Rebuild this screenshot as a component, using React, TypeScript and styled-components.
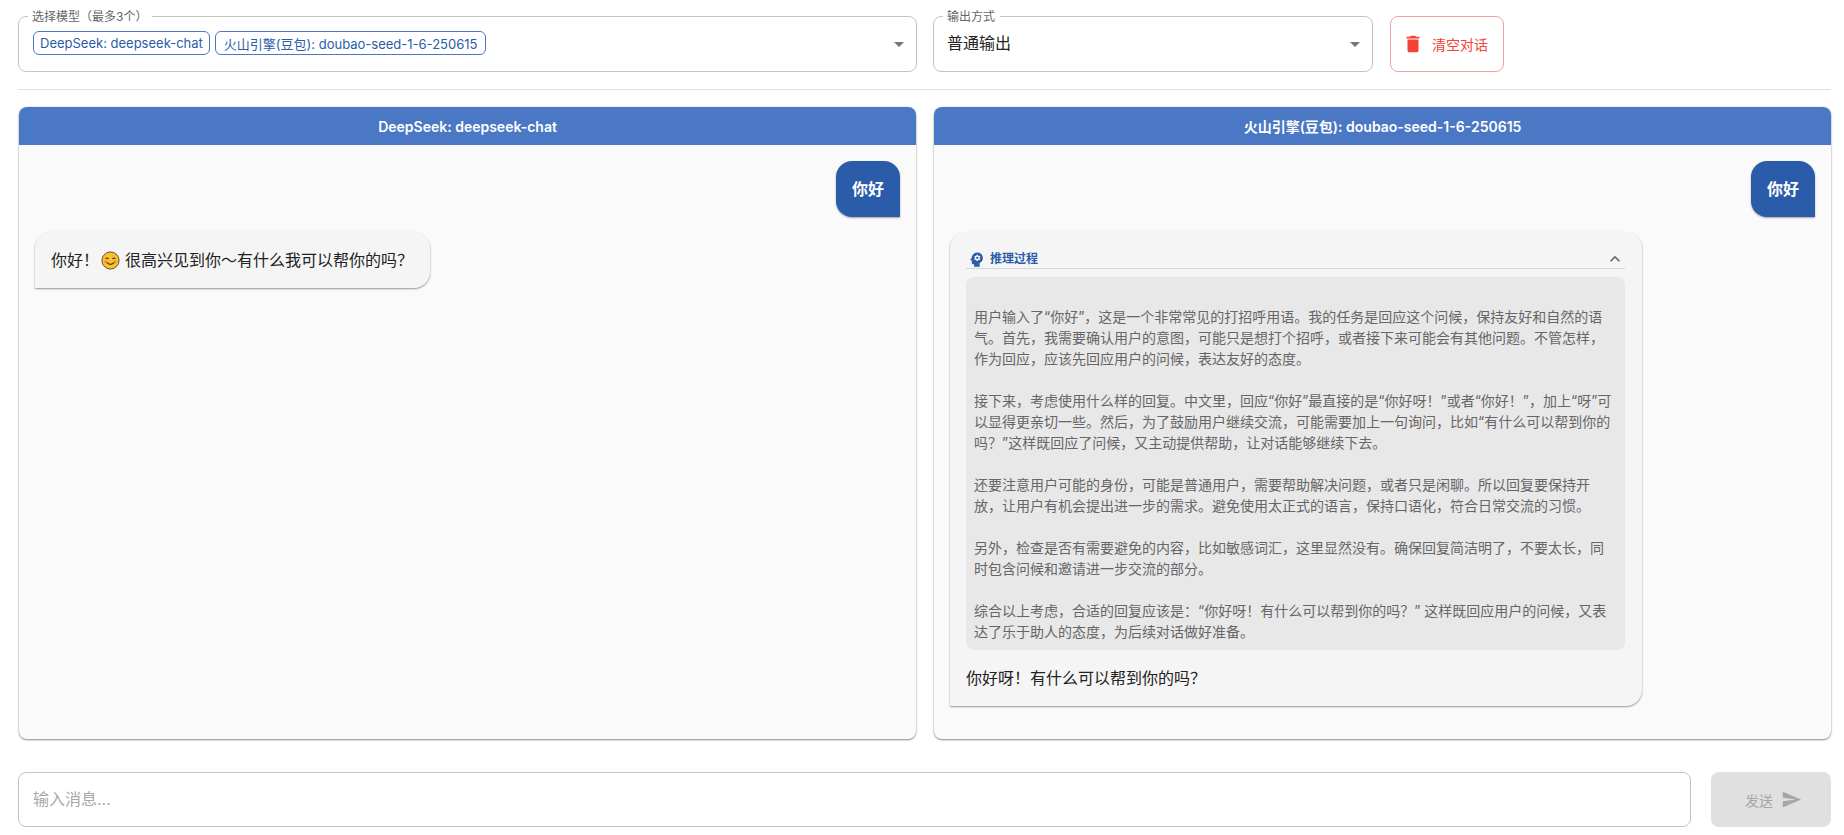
import React from "react";
import styled, { createGlobalStyle } from "styled-components";
import {
  MdArrowDropDown,
  MdDelete,
  MdExpandLess,
  MdPsychology,
  MdSend,
} from "react-icons/md";

const GlobalStyle = createGlobalStyle`
  html, body {
    margin: 0;
    padding: 0;
    background: #fff;
    font-family: Inter, "Noto Sans CJK SC", sans-serif;
  }
  * { box-sizing: border-box; }
`;

const Page = styled.div`
  width: 1844px;
  height: 835px;
  padding: 16px 13px 8px 18px;
  display: flex;
  flex-direction: column;
  overflow: hidden;
`;

const Toolbar = styled.div`
  display: flex;
  align-items: flex-start;
  height: 56px;
`;

const Field = styled.div<{ $width: number; $height: number }>`
  position: relative;
  width: ${(p) => p.$width}px;
  height: ${(p) => p.$height}px;
  margin-right: 16px;
  border: 1px solid #c4c4c4;
  border-radius: 8px;
  padding: 0 13px;
  display: flex;
  align-items: center;
  flex-shrink: 0;
`;

const FieldLabel = styled.span`
  position: absolute;
  top: -8px;
  left: 9px;
  padding: 0 5px 0 4px;
  background: #fff;
  font-size: 12px;
  line-height: 15px;
  color: #666;
`;

const Chips = styled.div`
  display: flex;
  gap: 5px;
  margin-top: -2px;
  margin-left: 1px;
`;

const Chip = styled.span<{ $pad: number }>`
  height: 24px;
  padding: 0 ${(p) => p.$pad}px;
  border: 1px solid #4a78c5;
  border-radius: 6px;
  display: flex;
  align-items: center;
  font-size: 13px;
  color: #2a5caa;
  white-space: nowrap;
`;

const SelectValue = styled.span`
  font-size: 16px;
  color: #222;
  margin-top: -4px;
`;

const Caret = styled(MdArrowDropDown)`
  position: absolute;
  right: 5px;
  top: 15px;
  font-size: 24px;
  color: #757575;
`;

const ClearButton = styled.button`
  width: 114px;
  height: 56px;
  margin-left: 1px;
  border: 1px solid #f8a0a0;
  border-radius: 8px;
  background: #fff;
  color: #f44336;
  display: flex;
  align-items: center;
  justify-content: center;
  gap: 8px;
  font-family: inherit;
  font-size: 14px;
  font-weight: 400;
  padding: 0 4px 0 0;
  svg { font-size: 22px; }
`;

const Divider = styled.hr`
  width: 100%;
  margin: 17px 0;
  border: 0;
  border-top: 1px solid #e0e0e0;
`;

const Panels = styled.div`
  display: grid;
  grid-template-columns: 897px 897px;
  gap: 18px;
  height: 632px;
  padding-left: 1px;
`;

const Panel = styled.section`
  display: flex;
  flex-direction: column;
  border-radius: 8px;
  overflow: hidden;
  background: #fafafa;
  box-shadow: 0 1px 2px rgba(0, 0, 0, 0.45), 0 0 2px rgba(0, 0, 0, 0.12);
`;

const PanelHeader = styled.header`
  height: 38px;
  background: #4a78c5;
  color: #fff;
  display: flex;
  align-items: center;
  justify-content: center;
  font-size: 14px;
  font-weight: 600;
`;

const Messages = styled.div`
  flex: 1;
  padding: 16px;
  display: flex;
  flex-direction: column;
  gap: 15px;
`;

const UserBubble = styled.div`
  align-self: flex-end;
  height: 56px;
  padding: 16px;
  border-radius: 16px 16px 0 16px;
  background: #2a5caa;
  color: #fff;
  font-size: 16px;
  font-weight: 700;
  line-height: 24px;
  box-shadow: 0 1px 2px rgba(0, 0, 0, 0.35);
`;

const ReplyBubble = styled.div<{ $width: number }>`
  align-self: flex-start;
  width: ${(p) => p.$width}px;
  padding: 16px;
  border-radius: 16px 16px 16px 0;
  background: #f5f5f5;
  color: #222;
  font-size: 16px;
  line-height: 24px;
  white-space: nowrap;
  box-shadow: 0 1px 2px rgba(0, 0, 0, 0.4);
`;

const ReasonedBubble = styled(ReplyBubble)`
  padding: 16px 17px 16px 16px;
`;

const Emoji = styled.svg`
  width: 19px;
  height: 19px;
  margin: 0 5px 0 2px;
  vertical-align: -4px;
`;

const ReasonHeader = styled.div`
  height: 21px;
  display: flex;
  align-items: center;
  gap: 4px;
  padding: 2px 0 0 1px;
  border-bottom: 1px solid #d6d6d6;
  font-size: 12px;
  font-weight: 700;
  color: #2a5caa;
`;

const Collapse = styled(MdExpandLess)`
  margin-left: auto;
  color: #666;
`;

const ReasonBody = styled.div`
  margin: 8px 0 16px;
  padding: 8px;
  border-radius: 8px;
  background: #e8e8e8;
  color: #666;
  font-size: 14px;
  line-height: 21px;
  white-space: pre-wrap;
`;

const Composer = styled.div`
  display: flex;
  gap: 20px;
  margin-top: 33px;
`;

const MessageInput = styled.div`
  flex: 1;
  height: 55px;
  border: 1px solid #c4c4c4;
  border-radius: 8px;
  padding: 0 14px 3px;
  display: flex;
  align-items: center;
  font-size: 16px;
  color: #a8a8a8;
`;

const SendButton = styled.button`
  width: 120px;
  height: 55px;
  border: 0;
  border-radius: 8px;
  padding: 0 0 0 5px;
  background: #e0e0e0;
  color: #a6a6a6;
  display: flex;
  align-items: center;
  justify-content: center;
  gap: 8px;
  font-family: inherit;
  font-size: 14px;
  font-weight: 400;
  svg { font-size: 21px; }
`;

const reasoning = `
用户输入了“你好”，这是一个非常常见的打招呼用语。我的任务是回应这个问候，保持友好和自然的语气。首先，我需要确认用户的意图，可能只是想打个招呼，或者接下来可能会有其他问题。不管怎样，作为回应，应该先回应用户的问候，表达友好的态度。

接下来，考虑使用什么样的回复。中文里，回应“你好”最直接的是“你好呀！”或者“你好！”，加上“呀”可以显得更亲切一些。然后，为了鼓励用户继续交流，可能需要加上一句询问，比如“有什么可以帮到你的吗？”这样既回应了问候，又主动提供帮助，让对话能够继续下去。

还要注意用户可能的身份，可能是普通用户，需要帮助解决问题，或者只是闲聊。所以回复要保持开放，让用户有机会提出进一步的需求。避免使用太正式的语言，保持口语化，符合日常交流的习惯。

另外，检查是否有需要避免的内容，比如敏感词汇，这里显然没有。确保回复简洁明了，不要太长，同时包含问候和邀请进一步交流的部分。

综合以上考虑，合适的回复应该是：“你好呀！有什么可以帮到你的吗？” 这样既回应用户的问候，又表达了乐于助人的态度，为后续对话做好准备。`;

const SmileEmoji = () => (
  <Emoji viewBox="0 0 20 20">
    <circle cx="10" cy="10" r="9" fill="#fbc02d" stroke="#5a4a20" strokeWidth="1" />
    <path d="M4.8 8.4q1.6-2 3.2 0M12 8.4q1.6-2 3.2 0" fill="none" stroke="#4a3410" strokeWidth="1.2" />
    <path d="M5.5 11.5q4.5 5 9 0" fill="none" stroke="#4a3410" strokeWidth="1.3" />
    <circle cx="4.8" cy="11.4" r="1.5" fill="#f28a5c" />
    <circle cx="15.2" cy="11.4" r="1.5" fill="#f28a5c" />
  </Emoji>
);

const App = () => (
  <Page>
    <GlobalStyle />
    <Toolbar>
      <Field $width={899} $height={56}>
        <FieldLabel>选择模型（最多3个）</FieldLabel>
        <Chips>
          <Chip $pad={6}>DeepSeek: deepseek-chat</Chip>
          <Chip $pad={8}>火山引擎(豆包): doubao-seed-1-6-250615</Chip>
        </Chips>
        <Caret />
      </Field>
      <Field $width={440} $height={56}>
        <FieldLabel>输出方式</FieldLabel>
        <SelectValue>普通输出</SelectValue>
        <Caret />
      </Field>
      <ClearButton>
        <MdDelete />
        清空对话
      </ClearButton>
    </Toolbar>
    <Divider />
    <Panels>
      <Panel>
        <PanelHeader>DeepSeek: deepseek-chat</PanelHeader>
        <Messages>
          <UserBubble>你好</UserBubble>
          <ReplyBubble $width={395}>
            你好！
            <SmileEmoji />
            很高兴见到你～有什么我可以帮你的吗？
          </ReplyBubble>
        </Messages>
      </Panel>
      <Panel>
        <PanelHeader>火山引擎(豆包): doubao-seed-1-6-250615</PanelHeader>
        <Messages>
          <UserBubble>你好</UserBubble>
          <ReasonedBubble $width={692}>
            <ReasonHeader>
              <MdPsychology size={19} />
              推理过程
              <Collapse size={20} />
            </ReasonHeader>
            <ReasonBody>{reasoning}</ReasonBody>
            你好呀！有什么可以帮到你的吗？
          </ReasonedBubble>
        </Messages>
      </Panel>
    </Panels>
    <Composer>
      <MessageInput>输入消息...</MessageInput>
      <SendButton>
        发送
        <MdSend />
      </SendButton>
    </Composer>
  </Page>
);

export default App;
